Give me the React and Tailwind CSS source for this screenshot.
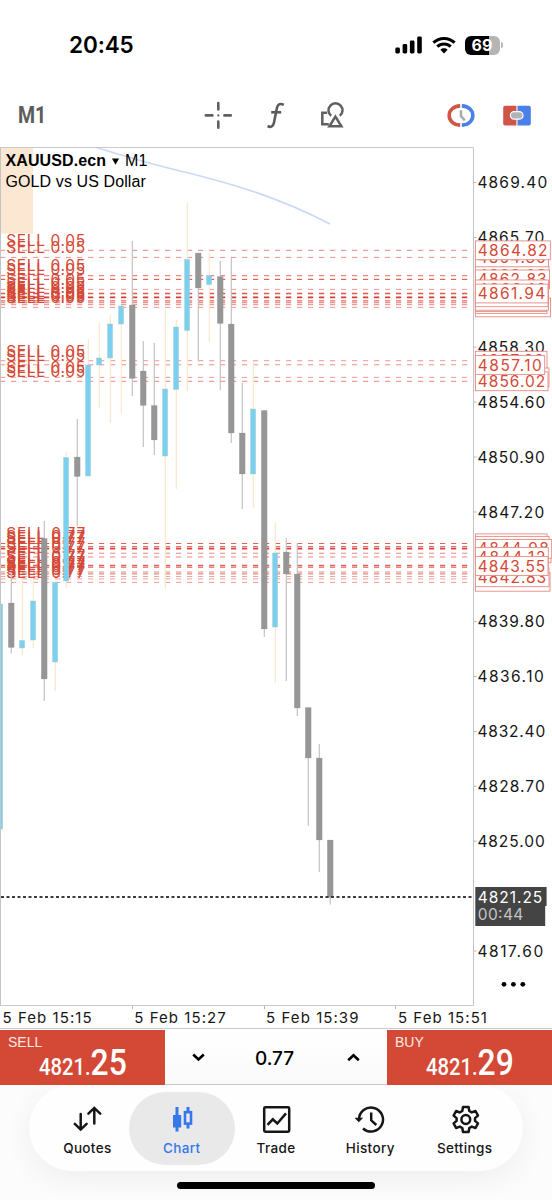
import React from 'react';

const RED = '#d54936';

// x position, high, body top, body bottom, low, rising
const candles = [
    [0, 604, 604, 829, 829, true],
    [11, 572, 603, 647.5, 653.5, false],
    [22, 578, 640.5, 648, 655, true],
    [33, 580, 601, 640, 648, true],
    [44, 521, 538.5, 679, 701, false],
    [55, 582, 582.5, 662, 691, true],
    [66, 452, 457.5, 581, 588, true],
    [77, 419, 457, 476.5, 526, false],
    [88, 339, 365, 476, 476, true],
    [99, 323, 358, 365, 408, true],
    [110, 315, 324, 358, 423, true],
    [121, 305, 306, 324, 413, true],
    [132, 241, 305, 378.5, 396, false],
    [143, 341, 371, 405.5, 447, false],
    [154, 343, 405.5, 440, 455, false],
    [165, 310, 389, 456, 589, true],
    [176, 320, 327, 389.5, 489, true],
    [187, 203, 259.5, 330.5, 391, true],
    [198, 253, 253, 288, 361, false],
    [209, 253, 275.5, 284.5, 342, true],
    [220, 261, 276.5, 323.5, 390, false],
    [231, 258, 324, 433, 443, false],
    [242, 383, 433, 474, 509, false],
    [253, 362, 409, 474, 508, true],
    [264, 410, 410.5, 629, 637, false],
    [275, 523, 553, 627, 683, true],
    [286, 538, 552, 574, 681, false],
    [297, 543, 574, 708, 716, false],
    [308, 707.5, 707.5, 758, 826, false],
    [319, 744, 758, 840, 872, false],
    [330, 840, 840, 897.5, 904.5, false],
];

// y, opacity, thickness, label
const orders = [
    [250.3, 0.6, 1, '0.05'],
    [257.4, 0.55, 1, '0.05'],
    [275.6, 0.6, 1.1, '0.05'],
    [279.4, 0.8, 1.1, '0.05'],
    [289.4, 0.5, 1, '0.05'],
    [293.5, 0.85, 1.4, '0.05'],
    [297.3, 1, 1.8, '0.05'],
    [300.8, 0.75, 1.3, '0.05'],
    [302.8, 0.7, 1.1, '0.05'],
    [304.7, 0.6, 1, '0.05'],
    [307.4, 0.5, 1, '0.05'],
    [360.7, 0.5, 1, '0.05'],
    [364.8, 0.55, 1, '0.05'],
    [377.4, 0.5, 1, '0.05'],
    [381.3, 0.6, 1, '0.05'],
    [543.5, 0.8, 1.2, '0.77'],
    [546.6, 0.7, 1.2, '0.77'],
    [548.6, 0.95, 1.6, '0.77'],
    [553.2, 0.6, 1.1, '0.77'],
    [557, 0.6, 1.1, '0.77'],
    [565.4, 0.8, 1.4, '0.77'],
    [567.2, 0.8, 1.2, '0.77'],
    [572, 0.6, 1.1, '0.77'],
    [573.9, 0.6, 1.1, '0.77'],
    [576.5, 0.45, 1, '0.77'],
    [578.9, 0.45, 1, '0.77'],
    [582.4, 0.5, 1, '0.77'],
];

const scale = [
    ['4869.40', 182.5, 69],
    ['4865.70', 237.5, 66],
    ['4858.30', 347.2, 66.5],
    ['4854.60', 402, 67],
    ['4850.90', 457, 66.5],
    ['4847.20', 512, 66],
    ['4839.80', 621.6, 66.5],
    ['4836.10', 676.6, 65.5],
    ['4832.40', 731.5, 67],
    ['4828.70', 786.3, 66.5],
    ['4825.00', 841.2, 66.5],
    ['4817.60', 951, 65],
];

// painted back to front: price, centre y, right edge
const tags = [
    ['4863.08', 275.6, 549],
    ['4862.83', 279.4, 549.5],
    ['4864.36', 257.4, 548.5],
    ['4864.82', 250.3, 550.3],
    ['4860.98', 307.4, 550.5],
    ['4861.18', 304, 547],
    ['4861.30', 302, 546.5],
    ['4861.42', 300.8, 548.5],
    ['4861.66', 297.3, 548],
    ['4862.16', 289.4, 548.5],
    ['4861.94', 293.5, 548],
    ['4857.39', 360.7, 547],
    ['4856.28', 377.4, 549],
    ['4856.02', 381.3, 548],
    ['4857.10', 365, 544.7],
    ['4845.12', 543.3, 547],
    ['4845.01', 545.8, 549],
    ['4844.69', 553.3, 551],
    ['4844.98', 548.8, 551.7],
    ['4844.12', 557, 548.3],
    ['4842.47', 581.8, 550],
    ['4842.83', 577.3, 549],
    ['4843.55', 566, 548],
];

function Chart() {
    return (
        <svg viewBox="0 147 552 859" className="block w-[552px] h-[859px] font-[Inter,sans-serif] text-[15.5px]">
            <rect x="0" y="148" width="33" height="85.5" fill="#fbe7d2" />
            <path d="M95 147 C117 154 140 161 172 169 C235 184 280 198 330 224" fill="none" stroke="#cbd8f6" strokeWidth="1.6" />

            {/* open positions */}
            {orders.map(([y, opacity, width, lots], i) => (
                <g key={i}>
                    <line x1="0" x2="473" y1={y} y2={y} stroke="#d93a30" strokeOpacity={opacity} strokeWidth={width} strokeDasharray="5.2 5.8" />
                    <text x="6.2" y={y - 4.2} fill={RED} textLength="79">SELL {lots}</text>
                </g>
            ))}

            {candles.map(([x, high, top, bottom, low, up]) => (
                <g key={x}>
                    <line x1={x + 0.3} x2={x + 0.3} y1={high} y2={low} stroke={up ? '#fbe6cb' : '#c2c2c2'} strokeWidth="1.2" />
                    <rect x={up ? x - 2.4 : x - 2.7} y={top} width={up ? 5 : 5.8} height={bottom - top} fill={up ? '#79d0f0' : '#969696'} stroke={up ? '#a8ccc8' : '#969696'} strokeWidth={up ? 0.5 : 0.2} />
                </g>
            ))}

            <line x1="0" x2="473" y1="897" y2="897" stroke="#3c3c3c" strokeWidth="1.8" strokeDasharray="3 2.5" strokeDashoffset="-1" />
            <path d="M0.5 1006 V147.4 H473.5 V1005.6 H0" fill="none" stroke="#c4c4c4" strokeWidth="1" />

            {/* price scale */}
            {scale.map(([price, y, w]) => (
                <g key={price}>
                    <line x1="474" x2="476.5" y1={y} y2={y} stroke="#b5b5b5" />
                    <text x="477.4" y={y + 5.6} textLength={w + 0.8} fill="#161616">{price}</text>
                </g>
            ))}
            {tags.map(([price, y, right]) => (
                <g key={price}>
                    <rect x="475.4" y={y - 9.4} width={right - 475.4} height="18.8" fill="#fff" stroke="#e58a82" strokeWidth="0.9" />
                    <text x="477.8" y={y + 5.6} textLength={right - 480.6} fill={RED}>{price}</text>
                </g>
            ))}
            <path d="M475.3 887 H546.6 V906 H545.2 V926 H475.3 Z" fill="#444" />
            <text x="477.8" y="902.8" textLength="64.5" fill="#fff">4821.25</text>
            <text x="477.8" y="920.4" textLength="45.5" fill="#c4c4c4">00:44</text>

            <circle cx="504" cy="984.3" r="2.4" />
            <circle cx="513.4" cy="984.3" r="2.4" />
            <circle cx="522.8" cy="984.3" r="2.4" />
        </svg>
    );
}

function StatusBar() {
    return (
        <div className="h-[86px] flex items-start justify-between pl-[69px] pr-[49px] pt-[31px]">
            <span className="font-[Inter,sans-serif] font-semibold text-[22.5px] leading-7 tracking-[-0.1px] text-black">20:45</span>
            <div className="flex items-center h-7">
                <svg width="28" height="18" viewBox="0 0 28 18">
                    <rect x="0.3" y="11.5" width="4.6" height="6" rx="1.4" />
                    <rect x="7.6" y="8" width="4.6" height="9.5" rx="1.4" />
                    <rect x="14.9" y="4.5" width="4.6" height="13" rx="1.4" />
                    <rect x="22.2" y="0.6" width="4.6" height="16.9" rx="1.4" />
                </svg>
                <svg className="ml-[9px]" width="24" height="18" viewBox="0 0 24 18" fill="none" stroke="#000" strokeWidth="3.1">
                    <path d="M1.4 6.7 C7.3 1 16.7 1 22.6 6.7" />
                    <path d="M5.3 10.7 C9 7 15 7 18.7 10.7" />
                    <path d="M8.4 13.7 C10.4 11.8 13.6 11.8 15.6 13.7 L12 17.4 Z" fill="#000" stroke="none" />
                </svg>
                <div className="ml-[9px] w-[35px] h-[19px] rounded-md overflow-hidden flex items-center justify-center bg-[linear-gradient(90deg,#000_69%,#b5b5b5_69%)]">
                    <span className="font-[Inter,sans-serif] font-bold text-[16px] leading-none text-white">69</span>
                </div>
                <div className="ml-[1.5px] w-[2px] h-[6px] rounded-r-full bg-[#b5b5b5]" />
            </div>
        </div>
    );
}

function Toolbar() {
    return (
        <div className="h-[61px] flex items-start">
            <span className="ml-[18px] mt-[15.5px] w-[127px] origin-left scale-x-[0.85] font-[Roboto,sans-serif] font-bold text-[23px] leading-7 text-[#5c5c5c]">M1</span>
            <svg className="ml-[59px] mt-[15px]" width="28" height="28" viewBox="0 0 28 28" stroke="#606060" strokeWidth="2.6" strokeLinecap="round">
                <path d="M14.3 2 V8.5 M14.3 20.5 V26.7 M1.8 14.4 H8.4 M20.4 14.4 H26.8" />
                <circle cx="14.3" cy="14.4" r="1.1" fill="#606060" stroke="none" />
            </svg>
            <svg className="ml-[32px] mt-[15px]" width="24" height="28" viewBox="0 0 24 28" fill="none" stroke="#5c5c5c" strokeWidth="2.6">
                <path d="M19.8 3.8 C15.8 1.8 13.6 3.6 12.9 7 L10 21.5 C9.2 25.6 6.8 26.8 3.6 25" />
                <path d="M7.2 11.3 H17.2" />
            </svg>
            <svg className="ml-[32px] mt-[15px]" width="28" height="28" viewBox="0 0 28 28" fill="none" stroke="#606060" strokeWidth="2.5">
                <path d="M11.2 14.8 A7 7 0 1 1 19.8 14.8" />
                <path d="M7.2 11.8 H2.3 V23.2 H8.8" />
                <path d="M15.4 15.7 L21.4 25.3 H9.4 Z" />
            </svg>
            <svg className="ml-[98px] mt-[15px]" width="30" height="28" viewBox="0 0 30 28" fill="none">
                <path d="M14.2 4.9 C-0.5 5.5 -0.5 23.5 14.2 24.1" stroke="#cf5546" strokeWidth="3.6" />
                <path d="M15.8 4.9 C30.5 5.5 30.5 23.5 15.8 24.1" stroke="#4a80e8" strokeWidth="3.6" />
                <path d="M15 9.3 V15.2 L18.8 19.4" stroke="#aaa" strokeWidth="2.5" />
            </svg>
            <svg className="ml-[26px] mt-[15px]" width="30" height="28" viewBox="0 0 30 28">
                <path d="M14.4 4.7 H3.2 Q1.2 4.7 1.2 6.7 V22.6 Q1.2 24.6 3.2 24.6 H14.4 Z" fill="#cf5546" />
                <path d="M15.5 4.7 H26.8 Q28.8 4.7 28.8 6.7 V22.6 Q28.8 24.6 26.8 24.6 H15.5 Z" fill="#4a80e8" />
                <rect x="8.4" y="10.7" width="12.6" height="7.4" rx="3.7" fill="#aeb4b8" stroke="#fff" strokeWidth="1.2" />
            </svg>
        </div>
    );
}

function Quote({ label, whole, pips }) {
    return (
        <div className="w-[165px] h-[55px] bg-[#d34935] text-white">
            <div className="pl-2 pt-1 font-['Liberation_Sans',sans-serif] text-[14px] leading-[17px] text-[#fbe9e6]">{label}</div>
            <div className="ml-[38.5px] -mt-[7px] flex items-baseline origin-left scale-x-[0.86] font-[Roboto,sans-serif] font-medium leading-[38px]">
                <span className="text-[23.5px]">{whole}.</span>
                <span className="text-[37px]">{pips}</span>
            </div>
        </div>
    );
}

function Tab({ label, active, children }) {
    return (
        <div className={`w-[106px] h-[73px] shrink-0 rounded-[37px] flex flex-col items-center pt-[13px] ${active ? 'bg-[#e9e9e9] text-[#3478ea]' : 'text-[#161616]'}`}>
            <svg width="32" height="30" viewBox="0 0 32 30" fill="none" stroke="currentColor" strokeWidth="2.5">
                {children}
            </svg>
            <span className="mt-[3px] font-[Inter,sans-serif] font-medium text-[13.5px] leading-5 tracking-[0.35px]">{label}</span>
        </div>
    );
}

export default function App() {
    return (
        <div className="w-[552px] h-[1200px] overflow-hidden bg-white">
            <StatusBar />
            <Toolbar />
            <div className="relative">
                <Chart />
                <div className="absolute left-[5.5px] top-[4px] font-['Liberation_Sans',sans-serif] text-[16px] leading-[20.5px] tracking-[0.1px] text-black">
                    <div className="flex items-center">
                        <b>XAUUSD.ecn</b>
                        <svg className="mx-[6px]" width="7" height="7" viewBox="0 0 7 7"><path d="M0 0.5 H7 L3.5 6.8 Z" /></svg>
                        <span>M1</span>
                    </div>
                    <div>GOLD vs US Dollar</div>
                </div>
            </div>

            <div className="h-[23px] flex border-b border-[#c9c9c9] font-[Inter,sans-serif] text-[15px] leading-[23px] tracking-[1.05px] text-[#161616] whitespace-nowrap">
                {['15:15', '15:27', '15:39', '15:51'].map((time, i) => (
                    <div key={time} className="w-[131.8px] shrink-0 flex">
                        <span className={`w-px h-[3px] ${i ? 'bg-[#b5b5b5]' : ''}`} />
                        <span className="ml-[1.5px]">5 Feb {time}</span>
                    </div>
                ))}
            </div>

            <div className="h-[56px] flex pt-px">
                <Quote label="SELL" whole="4821" pips="25" />
                <div className="flex-1 flex items-center justify-between px-[27px] border-b border-[#c9c9c9] bg-linear-to-b from-white to-[#fafafa]">
                    <svg width="13" height="9" viewBox="0 0 13 9" fill="none" stroke="#000" strokeWidth="2.6"><path d="M1.2 1.5 L6.5 6.5 L11.8 1.5" /></svg>
                    <span className="mt-[4px] -ml-[3px] font-[Inter,sans-serif] font-medium text-[19px] leading-6 tracking-[-0.1px]">0.77</span>
                    <svg width="13" height="9" viewBox="0 0 13 9" fill="none" stroke="#000" strokeWidth="2.6"><path d="M1.2 7.2 L6.5 2.2 L11.8 7.2" /></svg>
                </div>
                <Quote label="BUY" whole="4821" pips="29" />
            </div>

            <div className="h-[115px] overflow-hidden bg-[#fcfcfc]">
                <div className="mx-auto w-[494px] h-[86px] rounded-[43px] bg-[#fefefe] shadow-[0_8px_30px_rgba(0,0,0,0.06)] pt-[7px] flex justify-center">
                    <div className="flex -space-x-[11.7px]">
                        <Tab label="Quotes">
                            <path strokeLinecap="round" d="M9.7 9 V24 M3.8 18.8 L9.7 24.6 L15.6 18.8 M23.3 18.5 V3.5 M17.4 8.7 L23.3 2.9 L29.2 8.7" />
                        </Tab>
                        <Tab label="Chart" active>
                            <path strokeWidth="3" d="M11 2 V26.5 M22 2 V6 M22 19 V23.5" />
                            <path fill="currentColor" stroke="none" d="M7 10 H15.2 V22.5 H7 Z" />
                            <rect x="19" y="7.2" width="6" height="11.4" strokeWidth="2.6" />
                        </Tab>
                        <Tab label="Trade">
                            <rect x="4.2" y="2.2" width="25" height="24.6" rx="1.2" />
                            <path d="M7.5 19.8 L12.8 14.3 L17.3 18.5 L26 8.4" />
                        </Tab>
                        <Tab label="History">
                            <path d="M5 14.5 A12 12 0 1 1 9 23.5" />
                            <path d="M0.5 12.8 L4.8 17.2 L9.2 12.8 Z" fill="currentColor" stroke="none" />
                            <path d="M17.2 7.5 V15.3 L22.3 20" />
                        </Tab>
                        <Tab label="Settings">
                            <path strokeLinejoin="round" d="M14 2 H19.6 L20.3 6 L22.8 7.4 L26.5 6 L29 10.6 L26 13.1 V15.9 L29 18.4 L26.5 23 L22.8 21.6 L20.3 23 L19.6 27 H14 L13.3 23 L10.8 21.6 L7.1 23 L4.6 18.4 L7.6 15.9 V13.1 L4.6 10.6 L7.1 6 L10.8 7.4 L13.3 6 Z" />
                            <circle cx="16.8" cy="14.5" r="4.4" />
                        </Tab>
                    </div>
                </div>
                <div className="relative mx-auto mt-[11px] w-[198px] h-[7px] rounded-full bg-black" />
            </div>
        </div>
    );
}
